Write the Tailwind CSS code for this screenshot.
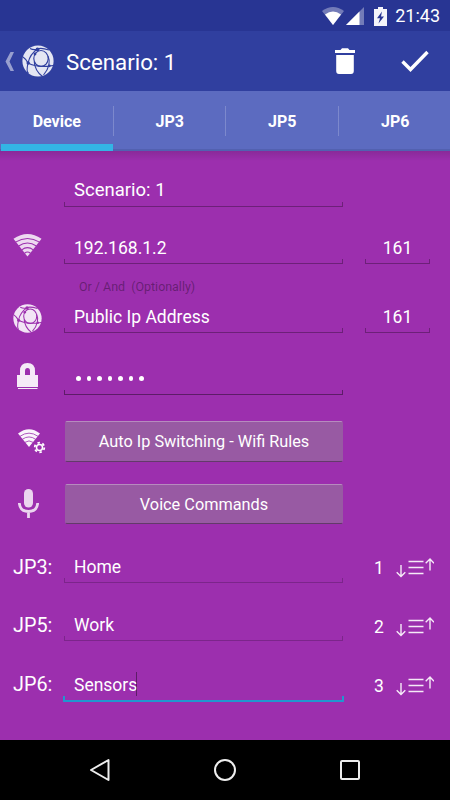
<!DOCTYPE html>
<html lang="en">
<head>
    <meta charset="UTF-8">
    <meta name="viewport" content="width=device-width, initial-scale=1.0">
    <title>Scenario: 1</title>
    <script src="https://cdn.jsdelivr.net/npm/@tailwindcss/browser@4"></script>
</head>
<body class="bg-black font-['Roboto',sans-serif] text-white">
    <!-- shared icons -->
    <svg class="hidden">
        <symbol id="globe" viewBox="0 0 32 32">
            <circle cx="16" cy="16" r="15.6" fill="#fff" fill-opacity=".87"/>
            <g fill="none" stroke="currentColor" stroke-width="1.150">
                <ellipse cx="19" cy="13.500" rx="7.200" ry="8"/>
                <path d="M8 3.500Q12 5.500 15.500 4T27 5M15.500 4Q8 9 6 18T6.500 28M26 11Q30 20 21.500 30M6 18Q15 23 31.500 20.500M12.300 17Q13 26 20.500 31.500M1 12Q4 14 6 18"/>
            </g>
            <g fill="currentColor">
                <circle cx="15.500" cy="4.500" r="1.900"/>
                <circle cx="6.200" cy="18" r="1.700"/>
                <circle cx="27.300" cy="20.800" r="1.400"/>
                <circle cx="13" cy="9" r="1.400"/>
            </g>
        </symbol>
        <symbol id="wifi" viewBox="0 0 30 24">
            <path d="M.5 5.500Q15-4.500 29.500 5.500L15 24Z" fill="#fff" fill-opacity=".82"/>
            <path d="M2.500 9Q15 1.500 27.500 9M5.800 13Q15 7 24.200 13M9 17Q15 12.500 21 17M12 20.500Q15 18 18 20.500" fill="none" stroke="currentColor" stroke-width="1.100"/>
        </symbol>
        <symbol id="sort" viewBox="0 0 38 20">
            <g fill="none" stroke="#fff" stroke-opacity=".9" stroke-width="1.400">
                <path d="M5 7V18M.7 14.200L5 18.400L9.300 14.200M34 12.500V1.500M29.700 5.300L34 1.100L38 5.300"/>
                <path d="M12.500 3.500H27.500M12.500 9.500H27.500M12.500 15.500H27.500"/>
            </g>
        </symbol>
    </svg>

    <div class="flex h-[800px] w-[450px] flex-col overflow-hidden">
        <!-- status bar -->
        <div class="flex h-[31px] items-center justify-end bg-[#283593] pt-px pr-[10px]">
            <svg class="h-[18px] w-[22px]" viewBox="0 0 22 18">
                <path d="M0 4Q11-4 22 4L11 18Z" fill="#fff" fill-opacity=".35"/>
                <path d="M3 7.500Q11 1.500 19 7.500L11 18Z" fill="#fff"/>
            </svg>
            <svg class="ml-[2px] h-[18px] w-[18px]" viewBox="0 0 18 18">
                <path d="M0 18L18 0V18Z" fill="#fff" fill-opacity=".35"/>
                <path d="M0 18L13.500 4.500V18Z" fill="#fff"/>
            </svg>
            <svg class="ml-[10px] h-[19px] w-[13px]" viewBox="0 0 13 19">
                <path d="M4 0H9V2H13V19H0V2H4Z" fill="#fff" fill-opacity=".95"/>
                <path d="M8 4.500L3 11.300H6L4.500 16.500L10 9.500H7Z" fill="#283593"/>
            </svg>
            <span class="ml-2 text-[18px] leading-5">21:43</span>
        </div>

        <!-- action bar -->
        <div class="flex h-[60px] items-center bg-[#303f9f]">
            <svg class="ml-[5px] h-[19px] w-[10px]" viewBox="0 0 10 19">
                <path d="M5.500 0H9L4.500 9.500L9 19H5.500L.5 9.500Z" fill="#fff" fill-opacity=".5"/>
            </svg>
            <svg class="ml-[7px] h-8 w-8 text-[#303f9f]"><use href="#globe"/></svg>
            <h1 class="ml-3 pt-px text-[22.300px] leading-7">Scenario: 1</h1>
            <svg class="ml-auto h-[26px] w-[20px]" viewBox="0 0 20 26">
                <path d="M0 2H5.500L7 .3H13L14.500 2H20V5H0ZM1.200 7H18.800V23Q18.800 26 16 26H4Q1.200 26 1.200 23Z" fill="#fff"/>
            </svg>
            <svg class="mr-[21px] ml-[46px] h-[22px] w-[28px]" viewBox="0 0 28 22">
                <path d="M1.500 11.500L9.500 19.500L26.500 2" fill="none" stroke="#fff" stroke-width="3.400"/>
            </svg>
        </div>

        <!-- tabs -->
        <div class="grid h-[60px] grid-cols-4 border-b-2 border-[#5261b0] bg-[#5c6bc0] text-center text-[16px] leading-[62px] font-bold">
            <div class="relative pl-px">Device<div class="absolute top-[53px] left-px h-[7px] w-[112px] bg-[#33b5e5]"></div></div>
            <div class="bg-linear-to-r from-white/20 from-[1px] to-transparent to-[1px] bg-[length:100%_30px] bg-[position:0_15px] bg-no-repeat pl-[2px]">JP3</div>
            <div class="bg-linear-to-r from-white/20 from-[1px] to-transparent to-[1px] bg-[length:100%_30px] bg-[position:0_15px] bg-no-repeat pl-[2px]">JP5</div>
            <div class="bg-linear-to-r from-white/20 from-[1px] to-transparent to-[1px] bg-[length:100%_30px] bg-[position:0_15px] bg-no-repeat pl-[3px]">JP6</div>
        </div>

        <!-- form -->
        <div class="flex h-[589px] flex-col bg-[#9c2fae] bg-linear-to-b from-black/12 to-transparent to-[10px] text-[17.5px] leading-[22px]">
            <div class="flex h-[56px] items-end pl-[64px]">
                <div class="w-[279px]">
                    <div class="pl-[10px] pb-px text-[18.500px]">Scenario: 1</div>
                    <div class="h-[5px] border-x border-b border-black/30"></div>
                </div>
            </div>

            <div class="flex h-[57px] items-end">
                <svg class="mb-[7px] ml-[13px] h-6 w-[29px] text-[#9c2fae]"><use href="#wifi"/></svg>
                <div class="ml-[22px] w-[279px]">
                    <div class="pl-[10px]">192.168.1.2</div>
                    <div class="h-[5px] border-x border-b border-black/30"></div>
                </div>
                <div class="ml-[22px] w-[65px] text-center">
                    <div>161</div>
                    <div class="h-[5px] border-x border-b border-black/30"></div>
                </div>
            </div>

            <div class="flex h-[32px] items-end pl-[79px] text-[12.450px] leading-[18px] whitespace-pre text-black/35">Or / And  (Optionally)</div>

            <div class="flex h-[37px] items-end">
                <svg class="ml-[13px] h-[29px] w-[29px] text-[#9c2fae]"><use href="#globe"/></svg>
                <div class="ml-[22px] w-[279px]">
                    <div class="pl-[10px]">Public Ip Address</div>
                    <div class="h-[5px] border-x border-b border-black/30"></div>
                </div>
                <div class="ml-[22px] w-[65px] text-center">
                    <div>161</div>
                    <div class="h-[5px] border-x border-b border-black/30"></div>
                </div>
            </div>

            <div class="flex h-[62px] items-end">
                <svg class="mb-[5px] ml-[17px] h-[27px] w-[21px]" viewBox="0 0 21 27">
                    <path d="M3 12V8Q3 0 10.500 0T18 8V12H21V24H0V12ZM8 12H13V8Q13 5 10.500 5T8 8Z" fill="#fff" fill-opacity=".9" fill-rule="evenodd"/>
                    <path d="M1 25.500H20.500" stroke="#fff" stroke-opacity=".9"/>
                </svg>
                <div class="ml-[26px] w-[279px]">
                    <div class="flex gap-[6px] pb-[9px] pl-[12px]">
                        <i class="h-[5px] w-[4.500px] rounded-full bg-white"></i>
                        <i class="h-[5px] w-[4.500px] rounded-full bg-white"></i>
                        <i class="h-[5px] w-[4.500px] rounded-full bg-white"></i>
                        <i class="h-[5px] w-[4.500px] rounded-full bg-white"></i>
                        <i class="h-[5px] w-[4.500px] rounded-full bg-white"></i>
                        <i class="h-[5px] w-[4.500px] rounded-full bg-white"></i>
                        <i class="h-[5px] w-[4.500px] rounded-full bg-white"></i>
                    </div>
                    <div class="h-[5px] border-x border-b border-black/40"></div>
                </div>
            </div>

            <div class="mt-[26px] flex h-[41px] items-start">
                <svg class="mt-[8px] ml-[18px] h-[25px] w-[28px] text-[#9c2fae]" viewBox="0 0 28 25">
                    <path d="M0 4.500Q11-4 22 4.500L11 18Z" fill="#fff" fill-opacity=".95"/>
                    <path d="M2 7.300Q11 1 20 7.300M4.300 10.300Q11 5.600 17.700 10.300M7 13.300Q11 10.500 15 13.300" fill="none" stroke="currentColor" stroke-width=".8"/>
                    <circle cx="21.500" cy="18.500" r="6" fill="currentColor"/>
                    <circle cx="21.500" cy="18.500" r="4.800" fill="none" stroke="#fff" stroke-width="1.800" stroke-dasharray="2.500"/>
                    <circle cx="21.500" cy="18.500" r="3" fill="none" stroke="#fff" stroke-width="1.500"/>
                </svg>
                <button class="ml-[19px] h-[41px] w-[278px] rounded-[2px] border border-t-white/30 border-r-transparent border-b-black/35 border-l-transparent bg-[#985aa3] pt-px text-[16.300px]">Auto Ip Switching - Wifi Rules</button>
            </div>

            <div class="mt-[22px] flex h-[40px] items-start">
                <svg class="mt-[5px] ml-[18px] h-[29px] w-[21px]" viewBox="0 0 21 29">
                    <rect x="6" width="9" height="18.500" rx="4.500" fill="#fff" fill-opacity=".8"/>
                    <path d="M1.300 14Q2 22.500 10.500 22.500T19.700 14M10.500 22.500V29" fill="none" stroke="#fff" stroke-opacity=".8" stroke-width="2.800"/>
                </svg>
                <button class="ml-[26px] h-[40px] w-[278px] rounded-[2px] border border-t-white/30 border-r-transparent border-b-black/35 border-l-transparent bg-[#985aa3] pt-[2px] text-[16.300px]">Voice Commands</button>
            </div>

            <div class="flex h-[59px] items-end">
                <div class="w-[64px] pb-[4px] pl-[13px] text-[19.800px]">JP3:</div>
                <div class="w-[279px]">
                    <div class="pl-[10px]">Home</div>
                    <div class="h-[5px] border-x border-b border-black/20"></div>
                </div>
                <div class="w-[53px] pb-1 pl-[31px]">1</div>
                <svg class="mb-[5px] h-5 w-[38px]"><use href="#sort"/></svg>
            </div>

            <div class="flex h-[58px] items-end">
                <div class="w-[64px] pb-[4px] pl-[13px] text-[19.800px]">JP5:</div>
                <div class="w-[279px]">
                    <div class="pl-[10px]">Work</div>
                    <div class="h-[5px] border-x border-b border-black/20"></div>
                </div>
                <div class="w-[53px] pb-[3px] pl-[31px]">2</div>
                <svg class="mb-[4px] h-5 w-[38px]"><use href="#sort"/></svg>
            </div>

            <div class="flex h-[61px] items-end">
                <div class="w-[63px] pb-[6px] pl-[13px] text-[19.800px]">JP6:</div>
                <div class="w-[281px]">
                    <div class="flex pl-[11px]">Sensors<span class="-ml-px -mt-[2px] h-6 w-px bg-black/40"></span></div>
                    <div class="h-[6px] border-x-2 border-b-2 border-[#2196cf]"></div>
                </div>
                <div class="w-[52px] pb-[5px] pl-[30px]">3</div>
                <svg class="mb-[6px] h-5 w-[38px]"><use href="#sort"/></svg>
            </div>
        </div>

        <!-- navigation bar -->
        <div class="flex h-[60px] items-center bg-black">
            <svg class="ml-[89px] h-6 w-[22px]" viewBox="0 0 22 24"><path d="M2 12L19.500 2V22Z" fill="none" stroke="#eee" stroke-width="2" stroke-linejoin="round"/></svg>
            <svg class="ml-[102px] h-6 w-6" viewBox="0 0 24 24"><circle cx="12" cy="12" r="10" fill="none" stroke="#eee" stroke-width="2"/></svg>
            <svg class="ml-[102px] h-[22px] w-[22px]" viewBox="0 0 22 22"><rect x="2" y="2" width="18" height="18" rx="1" fill="none" stroke="#eee" stroke-width="2"/></svg>
        </div>
    </div>
</body>
</html>
